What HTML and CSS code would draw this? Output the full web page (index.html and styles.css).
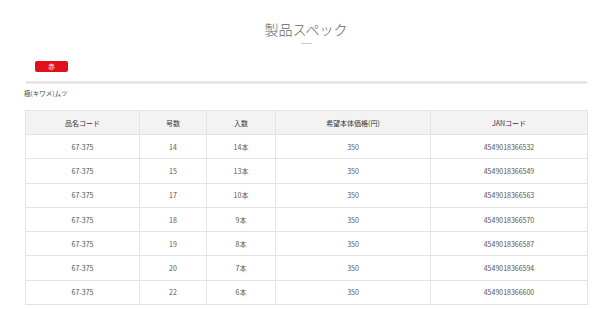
FILE: index.html
```html
<!DOCTYPE html>
<html lang="ja">
<head>
<meta charset="utf-8">
<meta name="format-detection" content="telephone=no">
<link rel="stylesheet" href="styles.css">
</head>
<body>
<div class="page">
  <h2 class="title">製品スペック</h2>
  <div class="title-bar"></div>
  <div class="tabs"><span class="badge">赤</span></div>
  <div class="rule"></div>
  <p class="name">極(キワメ)ムツ</p>
  <table class="spec">
    <colgroup><col class="c1"><col class="c2"><col class="c3"><col class="c4"><col class="c5"></colgroup>
    <thead>
      <tr><th>品名コード</th><th>号数</th><th>入数</th><th>希望本体価格(円)</th><th>JANコード</th></tr>
    </thead>
    <tbody>
      <tr><td>67-375</td><td>14</td><td>14本</td><td>350</td><td>4549018366532</td></tr>
      <tr><td>67-375</td><td>15</td><td>13本</td><td>350</td><td>4549018366549</td></tr>
      <tr><td>67-375</td><td>17</td><td>10本</td><td>350</td><td>4549018366563</td></tr>
      <tr><td>67-375</td><td>18</td><td>9本</td><td>350</td><td>4549018366570</td></tr>
      <tr><td>67-375</td><td>19</td><td>8本</td><td>350</td><td>4549018366587</td></tr>
      <tr><td>67-375</td><td>20</td><td>7本</td><td>350</td><td>4549018366594</td></tr>
      <tr><td>67-375</td><td>22</td><td>6本</td><td>350</td><td>4549018366600</td></tr>
    </tbody>
  </table>
</div>
</body>
</html>
```
FILE: styles.css
```css
html, body {
  margin: 0;
  padding: 0;
  background: #fff;
}
body {
  font-family: "Noto Sans CJK JP", "Noto Sans", sans-serif;
  color: #555;
  -webkit-font-smoothing: antialiased;
}
.page {
  padding: 19px 13px 0 25px;
}
.title {
  margin: 0;
  text-align: center;
  font-size: 14px;
  line-height: 20px;
  font-weight: 300;
  color: #666;
}
.title-bar {
  width: 11px;
  height: 1px;
  background: #c8c8c8;
  margin: 4px auto 0;
}
.tabs {
  display: flex;
  padding-left: 10px;
  margin-top: 17px;
}
.badge {
  display: flex;
  align-items: center;
  justify-content: center;
  width: 33px;
  height: 11px;
  background: #e0101c;
  border-radius: 2px;
  color: #fff;
  font-size: 6.5px;
  line-height: 1;
}
.rule {
  margin: 9px 0 0 1px;
  height: 3px;
  background: linear-gradient(#ececec, #e2e2e2 50%, #f2f2f2);
}
.name {
  margin: 5px 0 0 -1px;
  font-size: 6.5px;
  line-height: 9px;
  color: #444;
}
.spec {
  margin-top: 12px;
  width: 562px;
  border-collapse: collapse;
  table-layout: fixed;
  font-size: 7px;
}
.spec th, .spec td {
  border: 1px solid #e3e3e3;
  text-align: center;
  padding: 0;
  color: #555;
}
.spec th {
  height: 23px;
  background: #f3f3f3;
  font-weight: 400;
  color: #333;
}
.spec td {
  height: 23.3px;
}
.c1 { width: 114px; }
.c2 { width: 67px; }
.c3 { width: 69px; }
.c4 { width: 155px; }
.c5 { width: 157px; }
```
